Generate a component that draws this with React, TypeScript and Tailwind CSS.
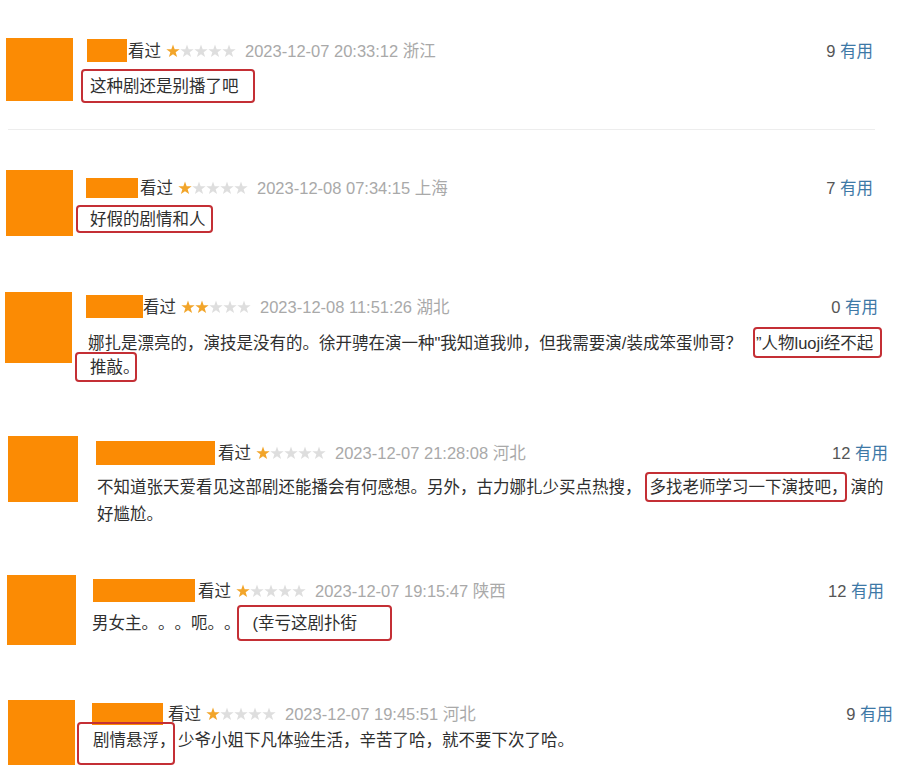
const STAR = '7,0.4 8.65,5.13 13.66,5.24 9.66,8.27 11.11,13.06 7,10.2 2.89,13.06 4.34,8.27 0.34,5.24 5.35,5.13';

function Stars({ n }: { n: number }) {
  return (
    <svg width="70" height="14" viewBox="0 0 70 14" className="shrink-0">
      {[0, 1, 2, 3, 4].map((i) => (
        <polygon
          key={i}
          transform={`translate(${i * 14} 0)`}
          points={STAR}
          fill={i < n ? '#f2a52a' : '#dedede'}
        />
      ))}
    </svg>
  );
}

function Avatar({ className }: { className: string }) {
  return <div className={`shrink-0 bg-[#fb8b04] ${className}`} />;
}

function NameBar({ className }: { className: string }) {
  return <div className={`shrink-0 bg-[#fb8b04] ${className}`} />;
}

function Meta({ stars, date, className = '' }: { stars: number; date: string; className?: string }) {
  return (
    <div className={`flex items-center whitespace-nowrap ${className}`}>
      <span className="text-[#333]">看过</span>
      <span className="ml-[5px] flex">
        <Stars n={stars} />
      </span>
      <span className="ml-[9px] text-[#a9a9a9]">{date}</span>
    </div>
  );
}

function Useful({ count }: { count: string }) {
  return (
    <div className="ml-auto whitespace-nowrap">
      <span className="text-[#555]">{count}</span> <span className="text-[#3d78a6]">有用</span>
    </div>
  );
}

function Box({ className, children }: { className: string; children: React.ReactNode }) {
  return (
    <span
      className={`inline-flex shrink-0 whitespace-nowrap rounded-[4px] border-2 border-[#c42f35] ${className}`}
    >
      {children}
    </span>
  );
}

export default function App() {
  return (
    <div className="h-[781px] w-[900px] overflow-hidden bg-white font-['Liberation_Sans','Noto_Sans_CJK_SC',sans-serif] text-[16.5px] leading-[24px] text-[#2f2f2f] [text-spacing-trim:space-all]">
      {/* 1 */}
      <div className="flex h-[129px] pl-[6px] pt-[38px]">
        <Avatar className="h-[63px] w-[67px]" />
        <div className="ml-[8px] flex-1 pr-[27px]">
          <div className="mt-[1px] flex h-[23px] items-center">
            <NameBar className="ml-[6px] h-[23px] w-[40px]" />
            <Meta className="ml-[1px]" stars={1} date="2023-12-07 20:33:12 浙江" />
            <Useful count="9" />
          </div>
          <div className="mt-[7px] flex">
            <Box className="h-[34px] w-[174px] items-center pl-[7px]">这种剧还是别播了吧</Box>
          </div>
        </div>
      </div>
      <div className="ml-[8px] mr-[25px] h-px bg-[#ededed]" />
      <div className="h-[30px]" />

      {/* 2 */}
      <div className="flex h-[120px] pl-[6px] pt-[10px]">
        <Avatar className="h-[66px] w-[67px]" />
        <div className="ml-[3px] flex-1 pr-[27px]">
          <div className="mt-[8px] flex h-[20px] items-center">
            <NameBar className="ml-[10px] h-[20px] w-[52px]" />
            <Meta className="ml-[2px]" stars={1} date="2023-12-08 07:34:15 上海" />
            <Useful count="7" />
          </div>
          <div className="mt-[7px] flex">
            <Box className="h-[28px] w-[137px] items-center pl-[12px]">好假的剧情和人</Box>
          </div>
        </div>
      </div>

      {/* 3 */}
      <div className="flex h-[150px] pl-[5px] pt-[12px]">
        <Avatar className="h-[71px] w-[67px]" />
        <div className="ml-[3px] flex-1 pr-[22px]">
          <div className="mt-[3px] flex h-[23px] items-center">
            <NameBar className="ml-[11px] h-[23px] w-[57px]" />
            <Meta stars={2} date="2023-12-08 11:51:26 湖北" />
            <Useful count="0" />
          </div>
          <div className="mt-[9px] flex h-[31px] items-center whitespace-nowrap pl-[13px]">
            <span>娜扎是漂亮的，演技是没有的。徐开骋在演一种"我知道我帅，但我需要演/装成笨蛋帅哥？</span>
            <Box className="-mr-[4px] ml-auto h-[31px] w-[129px] items-center pl-[1px]">”人物luoji经不起</Box>
          </div>
          <div className="-mt-[6px] flex">
            <Box className="h-[30px] w-[62px] items-center pl-[13px]">推敲。</Box>
          </div>
        </div>
      </div>

      {/* 4 */}
      <div className="flex h-[140px] pl-[8px] pt-[6px]">
        <Avatar className="h-[66px] w-[70px]" />
        <div className="ml-[18px] flex-1 pr-[12px]">
          <div className="mt-[5px] flex h-[24px] items-center">
            <NameBar className="h-[24px] w-[119px]" />
            <Meta className="ml-[3px]" stars={1} date="2023-12-07 21:28:08 河北" />
            <Useful count="12" />
          </div>
          <div className="mt-[7px] flex h-[30px] items-center whitespace-nowrap pl-[1px]">
            <span>不知道张天爱看见这部剧还能播会有何感想。另外，古力娜扎少买点热搜，</span>
            <Box className="ml-[3px] h-[30px] w-[202px] items-center pl-[3px]">多找老师学习一下演技吧，</Box>
            <span className="ml-[4px]">演的</span>
          </div>
          <div className="pl-[1px]">好尴尬。</div>
        </div>
      </div>

      {/* 5 */}
      <div className="flex h-[120px] pl-[7px] pt-[5px]">
        <Avatar className="h-[70px] w-[69px]" />
        <div className="ml-[16px] flex-1 pr-[16px]">
          <div className="mt-[4px] flex h-[23px] items-center">
            <NameBar className="ml-[1px] h-[23px] w-[102px]" />
            <Meta className="ml-[3px]" stars={1} date="2023-12-07 19:15:47 陕西" />
            <Useful count="12" />
          </div>
          <div className="mt-[3px] flex h-[36px] items-center whitespace-nowrap">
            <span>男女主。。。呃。。</span>
            <Box className="-ml-[4px] h-[36px] w-[155px] items-center pl-[14px]">(幸亏这剧扑街</Box>
          </div>
        </div>
      </div>

      {/* 6 */}
      <div className="flex h-[91px] pl-[8px] pt-[10px]">
        <Avatar className="h-[65px] w-[67px]" />
        <div className="ml-[2px] flex-1 pr-[7px]">
          <div className="mt-[3px] flex h-[22px] items-center">
            <NameBar className="ml-[15px] h-[22px] w-[71px]" />
            <Meta className="ml-[5px]" stars={1} date="2023-12-07 19:45:51 河北" />
            <Useful count="9" />
          </div>
          <div className="-mt-[3px] flex items-start whitespace-nowrap">
            <Box className="h-[43px] w-[98px] items-start pl-[14px] pt-[4px]">剧情悬浮，</Box>
            <span className="ml-[3px] mt-[6px]">少爷小姐下凡体验生活，辛苦了哈，就不要下次了哈。</span>
          </div>
        </div>
      </div>
    </div>
  );
}
